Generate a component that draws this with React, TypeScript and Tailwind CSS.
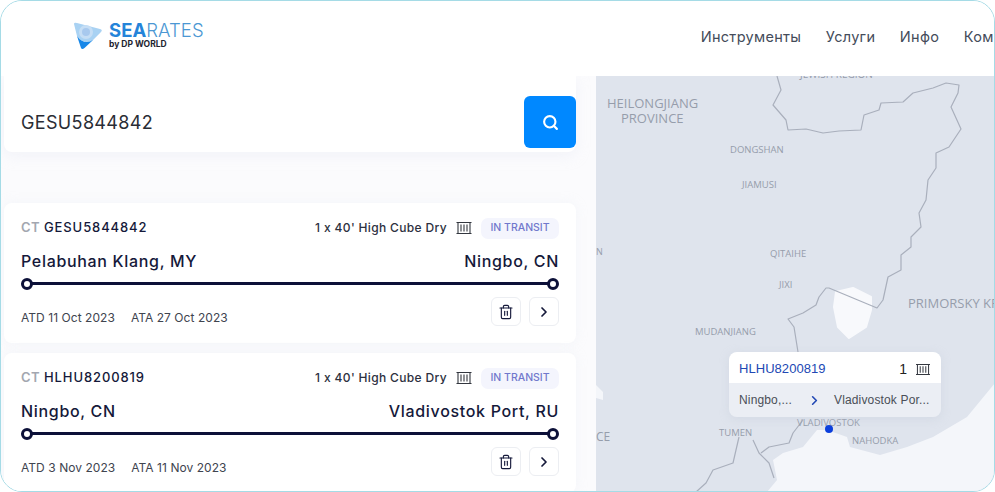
import { ChevronRight, Search, Trash2 } from 'lucide-react';

function ContainerIcon({ className }: { className?: string }) {
  return (
    <svg viewBox="0 0 16 14" className={className} fill="none" stroke="currentColor" strokeWidth="1.1">
      <path d="M0.5 1.5h15M0.5 12.5h15M2 1.5v11h12v-11M5 3.5v7M8 3.5v7M11 3.5v7" />
    </svg>
  );
}

interface ShipmentProps {
  id: string;
  from: string;
  to: string;
  atd: string;
  ata: string;
}

function ShipmentCard({ id, from, to, atd, ata }: ShipmentProps) {
  return (
    <div className="h-[140px] shrink-0 bg-white rounded-lg px-[17px] pt-[15px] shadow-[0_0_12px_rgba(225,230,240,0.25)]">
      <div className="flex items-center h-[20px]">
        <span className="text-[13px] font-semibold text-[#a3a7b0] tracking-[0.4px]">CT</span>
        <span className="ml-[4px] text-[13px] font-medium text-[#15193a] tracking-[0.9px]">{id}</span>
        <span className="ml-auto text-[12px] font-medium text-[#2c3040] tracking-[0.35px]">1 x 40' High Cube Dry</span>
        <ContainerIcon className="ml-[9px] w-[16px] h-[14px] text-[#33373f]" />
        <span className="ml-[9px] w-[78px] h-[21px] flex items-center justify-center rounded-[7px] bg-[#f4f5fd] text-[10.5px] font-medium text-[#7178cc]">
          IN TRANSIT
        </span>
      </div>
      <div className="flex justify-between mt-[12px] text-[16px] font-medium text-[#15193a] tracking-[0.68px] leading-[22px]">
        <span>{from}</span>
        <span>{to}</span>
      </div>
      <div className="relative h-[3px] mt-[10px] mx-[2px] bg-[#0c1038]">
        <span className="absolute -left-[2px] -top-[4px] w-[12px] h-[12px] rounded-full border-[3px] border-[#0c1038] bg-white" />
        <span className="absolute -right-[2px] -top-[4px] w-[12px] h-[12px] rounded-full border-[3px] border-[#0c1038] bg-white" />
      </div>
      <div className="flex items-end mt-[12px]">
        <span className="text-[12px] leading-[16px] text-[#40444f] tracking-[0.05px]">{atd}</span>
        <span className="ml-[16px] text-[12px] leading-[16px] text-[#40444f] tracking-[0.05px]">{ata}</span>
        <button className="ml-auto w-[30px] h-[29px] flex items-center justify-center rounded-md border border-[#eceef2] bg-white text-[#15193a]">
          <Trash2 size={16} strokeWidth={1.7} />
        </button>
        <button className="ml-[8px] w-[30px] h-[29px] flex items-center justify-center rounded-md border border-[#eceef2] bg-white text-[#15193a]">
          <ChevronRight size={16} strokeWidth={2.6} />
        </button>
      </div>
    </div>
  );
}

function MapLabel({ x, y, size, children }: { x: number; y: number; size: number; children: string }) {
  return (
    <span
      className="absolute whitespace-pre text-[#969dab] leading-none font-['Open_Sans',sans-serif]"
      style={{ left: x - 596, top: y - 76, fontSize: size }}
    >
      {children}
    </span>
  );
}

export default function App() {
  return (
    <div className="w-[995px] h-[492px] bg-white">
      <div className="relative w-full h-full flex flex-col overflow-hidden rounded-[22px] border border-[#a5dbe6] bg-white font-['Inter',sans-serif]">
        <header className="h-[75px] shrink-0 flex items-center bg-white">
          <div className="ml-[71px] mt-[-6px] flex items-center">
            <svg viewBox="72 21 32 30" className="w-[32px] h-[30px]">
              <path d="M74 24 Q74 22 77 23 L100 29 Q103 30 101 32 L92 41 Q89 42 86 42 Q80 41 77 36 Z" fill="#a9d2f3" />
              <path d="M77 36 Q81 42 87 42 Q90 42 93 40 L84.5 48 Q82 50 81 48 Z" fill="#1787e8" />
              <circle cx="86" cy="32" r="7" fill="#c6def5" />
              <circle cx="86" cy="32" r="4" fill="#a8c9ee" />
            </svg>
            <div className="ml-[5px] mt-[-2px] flex flex-col">
              <span className="text-[18.5px] leading-[18px] tracking-[0.05px] text-[#4b97d3] font-light">
                <span className="font-bold text-[#2584d9]">SEA</span>RATES
              </span>
              <span className="mt-[1px] text-[8.5px] leading-[8px] font-bold text-[#1d2430]">by DP WORLD</span>
            </div>
          </div>
          <nav className="ml-[497px] mt-[-4px] flex gap-[24.5px] text-[14.5px] text-[#444c5a] tracking-[0.3px] whitespace-nowrap">
            <span>Инструменты</span>
            <span>Услуги</span>
            <span>Инфо</span>
            <span>Компания</span>
          </nav>
        </header>
        <main className="flex flex-1 min-h-0">
          <section className="w-[595px] shrink-0 flex flex-col bg-[#fbfbfd] pl-[3px] pr-[20px] overflow-hidden">
            <div className="h-[76px] shrink-0 flex items-end justify-between bg-white rounded-b-lg pl-[17px] pb-[4px] shadow-[0_4px_14px_rgba(225,230,240,0.35)]">
              <span className="mb-[12px] text-[18px] text-[#2a2d35] tracking-[0.35px]">GESU5844842</span>
              <button className="w-[52px] h-[52px] flex items-center justify-center rounded-md bg-[#0088ff] text-white">
                <Search size={17} strokeWidth={3} />
              </button>
            </div>
            <div className="mt-[51px] flex flex-col gap-[10px]">
              <ShipmentCard id="GESU5844842" from="Pelabuhan Klang, MY" to="Ningbo, CN" atd="ATD 11 Oct 2023" ata="ATA 27 Oct 2023" />
              <ShipmentCard id="HLHU8200819" from="Ningbo, CN" to="Vladivostok Port, RU" atd="ATD 3 Nov 2023" ata="ATA 11 Nov 2023" />
            </div>
          </section>
          <section className="relative flex-1 bg-[#dfe4ed] overflow-hidden">
            <svg viewBox="596 76 399 416" className="absolute left-0 top-0 w-[399px] h-[416px] blur-[0.5px]" fill="none">
              <path d="M995 383 L967 417 L933 437 L907 447 L880 455 L850 447 L847 437 L827 430 L817 430 L803 447 L783 453 L773 460 L777 480 L767 492 L995 492 Z" fill="#f4f6fa" />
              <path d="M836 292 L853 288 L871 297 L871 310 L866 327 L849 338 L838 327 L834 307 Z" fill="#f8f9fc" strokeLinejoin="round" stroke="#f8f9fc" strokeWidth="2" />
              <path d="M596 385 L603 392 L603 400 L596 398 Z" fill="#f4f6fa" />
              <g stroke="#a9afbc" strokeWidth="1.2" strokeLinejoin="round">
                <path d="M777 76 L781 90 L773 105 L786 120 L788 130 L806 129 L823 133 L839 131 L861 130 L864 115 L879 110 L881 103 L903 102 L913 93 L933 88 L946 83 L959 85 L958 93 L951 107 L961 129 L949 147 L936 153 L936 168 L928 180 L926 200 L919 213 L921 227 L911 237 L911 247 L901 255 L901 270 L888 277 L883 300 L877 308 L829 288 L826 288 L819 297 L816 305 L803 313 L788 319 L794 327 L798 352" />
                <path d="M739 437 L733 463 L713 470 L706 483 L696 492" />
                <path d="M753 440 L759 453 L769 463 L774 478 M761 453 L769 447 L789 443 L793 433 L803 420" />
              </g>
            </svg>
            <MapLabel x={800} y={69} size={10}>JEWISH REGION</MapLabel>
            <MapLabel x={607} y={97} size={13}>HEILONGJIANG</MapLabel>
            <MapLabel x={621} y={112} size={13}>PROVINCE</MapLabel>
            <MapLabel x={730} y={145} size={9.5}>DONGSHAN</MapLabel>
            <MapLabel x={742} y={180} size={9.5}>JIAMUSI</MapLabel>
            <MapLabel x={596} y={247} size={9}>N</MapLabel>
            <MapLabel x={770} y={249} size={9.5}>QITAIHE</MapLabel>
            <MapLabel x={779} y={280} size={9.5}>JIXI</MapLabel>
            <MapLabel x={908} y={297} size={13}>PRIMORSKY KRAI</MapLabel>
            <MapLabel x={695} y={327} size={9.5}>MUDANJIANG</MapLabel>
            <MapLabel x={596} y={431} size={12}>CE</MapLabel>
            <MapLabel x={719} y={428} size={9.5}>TUMEN</MapLabel>
            <MapLabel x={797} y={418} size={9.5}>VLADIVOSTOK</MapLabel>
            <MapLabel x={852} y={436} size={9.5}>NAHODKA</MapLabel>
            <span className="absolute left-[229px] top-[349px] w-[8px] h-[8px] rounded-full bg-[#0b3fdc]" />
            <div className="absolute left-[133px] top-[276px] w-[212px] h-[65px] rounded-lg overflow-hidden font-['Liberation_Sans',sans-serif] shadow-[0_2px_10px_rgba(190,198,212,0.35)]">
              <div className="h-[31px] flex items-center bg-white pl-[10px] pr-[10px]">
                <span className="mt-[2px] text-[13px] text-[#2148b4] tracking-[0.05px]">HLHU8200819</span>
                <span className="ml-auto mt-[4px] text-[14px] text-[#222]">1</span>
                <ContainerIcon className="ml-[8px] mt-[4px] w-[16px] h-[13px] text-[#33373f]" />
              </div>
              <div className="h-[34px] flex items-center bg-[#ebeef4] pl-[10px] text-[12px] text-[#4a4e57] tracking-[0.15px]">
                <span className="w-[68px]">Ningbo,...</span>
                <ChevronRight size={15} strokeWidth={2.6} className="text-[#2148b4]" />
                <span className="ml-[12px]">Vladivostok Por...</span>
              </div>
            </div>
          </section>
        </main>
      </div>
    </div>
  );
}
